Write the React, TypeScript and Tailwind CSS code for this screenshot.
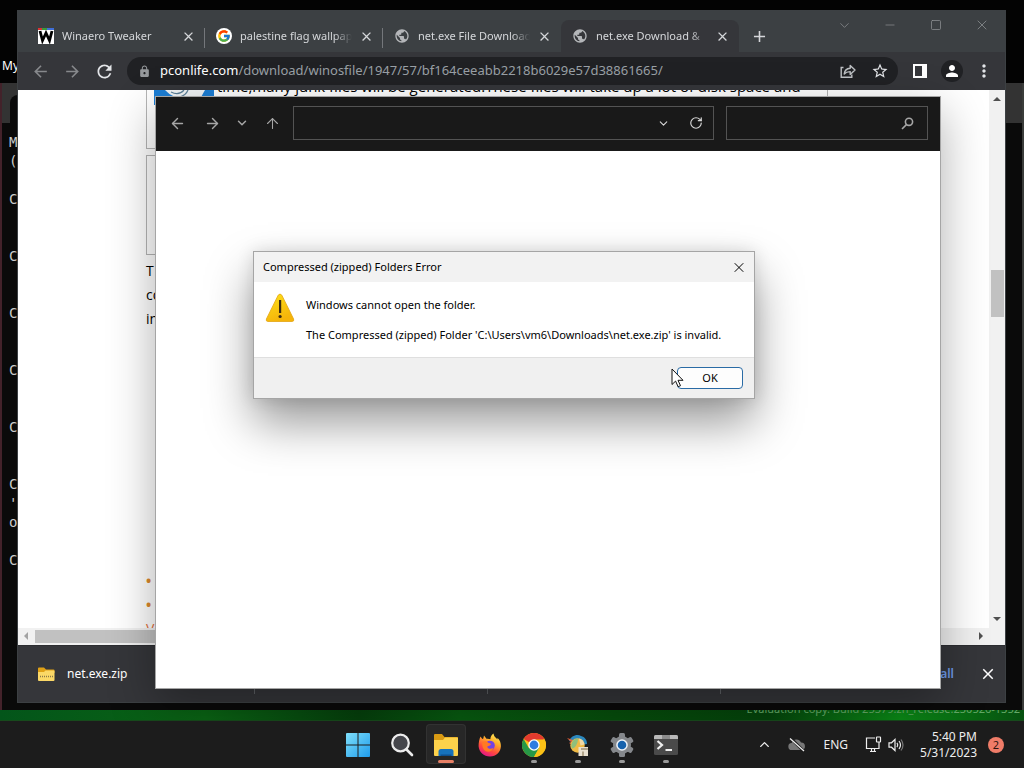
import React from 'react';
import { FcGoogle } from 'react-icons/fc';
import {
  MdAdd, MdArrowBack, MdArrowForward, MdClose, MdLock, MdMoreVert,
  MdPerson, MdPublic, MdRefresh, MdStarBorder,
} from 'react-icons/md';
import { ArrowLeft, ArrowRight, ArrowUp, ChevronDown, ChevronUp, Minus, RotateCw, Square, X } from 'lucide-react';

const CONSOLE_LINES = ['M', '(', '', 'C', '', '', 'C', '', '', 'C', '', '', 'C', '', '', 'C', '', '', 'C', "'", 'o', '', 'C'];

const WinaeroIcon = () => (
  <svg width="16" height="16" viewBox="0 0 16 16" className="shrink-0">
    <path d="M0 0h16v16H0z" fill="#fff" />
    <path d="M0 0h4v2H0z" fill="#d33" />
    <path d="M4 0h5v2H4z" fill="#3a9a3a" />
    <path d="M9 0h7v2H9z" fill="#3f6fd8" />
    <path d="M2 3l2.500 9.500L8 5l3.500 7.500L14 3" fill="none" stroke="#000" strokeWidth="2.800" />
  </svg>
);

const TABS = [
  { title: 'Winaero Tweaker', icon: <WinaeroIcon />, active: false, divider: true },
  {
    title: 'palestine flag wallpaper',
    icon: <span className="w-4 h-4 shrink-0 rounded-full bg-white flex items-center justify-center"><FcGoogle size={14} /></span>,
    active: false,
    divider: true,
  },
  { title: 'net.exe File Download', icon: <MdPublic size={16} className="shrink-0 text-[#b4b6b9]" />, active: false, divider: false },
  { title: 'net.exe Download &', icon: <MdPublic size={16} className="shrink-0 text-[#b4b6b9]" />, active: true, divider: false },
];

const ShareIcon = () => (
  <svg width="16" height="16" viewBox="0 0 16 16" fill="none" stroke="currentColor" strokeWidth="1.4">
    <path d="M3.5 4.5H1.2v9.8h10.6v-2.8" />
    <path d="M4.2 11c.4-3.6 2.500-5.600 6-5.800V2.500L15 7l-4.800 4.500V8.600C7.600 8.600 5.600 9.300 4.200 11z" strokeLinejoin="round" />
  </svg>
);

const FolderZipIcon = () => (
  <svg width="17" height="15" viewBox="0 0 17 15">
    <path d="M0 1.500Q0 .5 1 .5h5l2 2h7.500q1 0 1 1V6H0z" fill="#e0a116" />
    <path d="M0 5h6l1.500-1.500h8.500q.5 0 .5.500v9q0 1-1 1H1q-1 0-1-1z" fill="#fbd867" />
    <path d="M2 9.500h13" stroke="#8a7a4a" strokeWidth="1.500" strokeDasharray="1 1" />
  </svg>
);

const WarningIcon = () => (
  <svg width="30" height="30" viewBox="0 0 30 30" className="shrink-0">
    <defs>
      <linearGradient id="warn" x1="0" y1="0" x2="0.4" y2="1">
        <stop offset="0" stopColor="#fde21b" />
        <stop offset="1" stopColor="#f5b40a" />
      </linearGradient>
    </defs>
    <path d="M13.200 2.200q1.800-2.400 3.600 0L28.600 26q.8 2.500-1.600 2.500H3Q.6 28.500 1.400 26z" fill="url(#warn)" stroke="#e3a512" strokeWidth=".8" />
    <rect x="14" y="7" width="2.200" height="13" fill="#3a2a12" />
    <circle cx="15.100" cy="23.500" r="1.600" fill="#3a2a12" />
  </svg>
);

const StartIcon = () => (
  <svg width="24" height="24" viewBox="0 0 24 24">
    <defs>
      <linearGradient id="win" x1="0" y1="0" x2="1" y2="1">
        <stop offset="0" stopColor="#7fe0fb" />
        <stop offset="1" stopColor="#1f9bea" />
      </linearGradient>
    </defs>
    <path d="M1 0h10.500v11.500H0V1q0-1 1-1zM12.500 0H23q1 0 1 1v10.500H12.500zM0 12.500h11.500V24H1q-1 0-1-1zM12.500 12.500H24V23q0 1-1 1H12.500z" fill="url(#win)" />
  </svg>
);

const SearchTaskIcon = () => (
  <svg width="24" height="24" viewBox="0 0 24 24">
    <circle cx="10.500" cy="10" r="8.300" fill="#45464b" stroke="#ececec" strokeWidth="2.200" />
    <path d="M16.500 16.500l5.500 5.500" stroke="#ececec" strokeWidth="2.600" strokeLinecap="round" />
  </svg>
);

const ExplorerIcon = () => (
  <svg width="26" height="24" viewBox="0 0 26 24">
    <path d="M1 2q0-1 1-1h7l2.500 3H24q1 0 1 1v5H1z" fill="#d99a13" />
    <path d="M1 7h9l2-2.500h12.500q.5 0 .5.500v17q0 1-1 1H2q-1 0-1-1z" fill="#fdd24b" />
    <path d="M5.500 23v-4.500q0-2.500 2.500-2.500h10q2.500 0 2.500 2.500V23z" fill="#1672bd" />
    <path d="M7.500 23v-1.500h11V23z" fill="#0e4f8d" />
  </svg>
);

const FirefoxIcon = () => (
  <svg width="24" height="24" viewBox="0 0 24 24">
    <defs>
      <linearGradient id="ff" x1="0.800" y1="0" x2="0.300" y2="1">
        <stop offset="0" stopColor="#fff05a" />
        <stop offset="0.350" stopColor="#ffae2b" />
        <stop offset="0.700" stopColor="#ff4a3d" />
        <stop offset="1" stopColor="#e3148c" />
      </linearGradient>
    </defs>
    <path d="M2.500 3.500l1.800 2.600 1-.5.700-3 2.500 3.200c1.800-.3 3 .2 3.800.4.300-3 1.400-4.700 3.200-5.800.3 2.200 1.300 3.400 2.700 4.700l1 1.500.4-1.500c2.400 2.300 3.400 5 3.300 8.200C22.700 19 18.300 23.500 12 23.500S1 19 .6 13.200C.5 10 1.400 6 2.500 3.500z" fill="url(#ff)" />
    <circle cx="12" cy="12.500" r="4.800" fill="#7542e5" />
    <path d="M4.500 9c2.400-1.400 4.400-1 6 1 2 .3 2.500.8 2.300 1.700-1 1.300-3.300 1.100-3.500 2.300.5 2.200 4.200 2.300 6 .8-1 3.700-5 5-8 3.200C4.800 16.300 3.700 12.500 4.500 9z" fill="#ff7a24" />
  </svg>
);

const ChromeIcon = () => (
  <svg width="24" height="24" viewBox="0 0 24 24">
    <circle cx="12" cy="12" r="12" fill="#fbc116" />
    <path d="M12 12L1.600 6A12 12 0 0 1 22.400 6z" fill="#e33b2e" />
    <path d="M1.600 6A12 12 0 0 0 12 24l5.200-9L12 12l-5.200 3z" fill="#279847" />
    <path d="M12 6.500h10.700A12 12 0 0 1 12 24l5-9z" fill="#fbc116" />
    <circle cx="12" cy="12" r="5.700" fill="#fff" />
    <circle cx="12" cy="12" r="4.400" fill="#2f7de1" />
  </svg>
);

const TweakerIcon = () => (
  <svg width="24" height="24" viewBox="0 0 24 24">
    <path d="M3 8C5 3 11 .5 15 3c4 1 6 4 6 8l-6 1-8-3z" fill="#2c88bd" />
    <path d="M1 5l6 2-2 2zM3 10l4-2 1 5z" fill="#e1603b" />
    <circle cx="11.500" cy="12.500" r="7.200" fill="#efb944" />
    <path d="M12 5.500a7 7 0 0 0-6 10c3 0 6-5 6-10z" fill="#8fbf7c" />
    <path d="M13 5.500a7 7 0 0 1 5.500 6l-4 1z" fill="#f1d9a5" />
    <path d="M12.500 14h9.500v9h-9.500z" fill="#e8e0cf" />
    <path d="M15 16h7M17 18.500v4.500" stroke="#9d8e73" strokeWidth="1.500" />
  </svg>
);

const SettingsIcon = () => (
  <svg width="24" height="24" viewBox="0 0 24 24">
    <g fill="#85888c">
      <circle cx="12" cy="12" r="9" />
      <rect x="9" y="0" width="6" height="24" rx="1.500" />
      <rect x="9" y="0" width="6" height="24" rx="1.500" transform="rotate(60 12 12)" />
      <rect x="9" y="0" width="6" height="24" rx="1.500" transform="rotate(120 12 12)" />
    </g>
    <circle cx="12" cy="12" r="5.800" fill="#eef3f8" />
    <circle cx="12" cy="12" r="4.300" fill="#1662ad" />
  </svg>
);

const TerminalIcon = () => (
  <svg width="24" height="20" viewBox="0 0 24 20">
    <rect width="24" height="20" rx="1.500" fill="#4a4a4a" />
    <path d="M0 4V1.500Q0 0 1.500 0h21Q24 0 24 1.500V4z" fill="#b9b9b9" />
    <path d="M8 0h8v4H8z" fill="#8b8b8b" />
    <path d="M3.500 6l4.500 4-4.500 4" fill="none" stroke="#f0f0f0" strokeWidth="2.200" />
    <path d="M11.500 15h6.500" stroke="#f0f0f0" strokeWidth="2" />
  </svg>
);

const APPS = [
  { name: 'Start', icon: <StartIcon />, state: 'closed' },
  { name: 'Search', icon: <SearchTaskIcon />, state: 'closed' },
  { name: 'File Explorer', icon: <ExplorerIcon />, state: 'active' },
  { name: 'Firefox', icon: <FirefoxIcon />, state: 'closed' },
  { name: 'Chrome', icon: <ChromeIcon />, state: 'open' },
  { name: 'Winaero Tweaker', icon: <TweakerIcon />, state: 'open' },
  { name: 'Settings', icon: <SettingsIcon />, state: 'open' },
  { name: 'Terminal', icon: <TerminalIcon />, state: 'open' },
];

const ConsoleWindow = () => (
  <div className="absolute top-[83px] inset-x-0 bottom-[11px] bg-[#0a0a0a] border-l-2 border-l-[#43222a] border-r-2 border-r-[#3a3c3a]">
    <div className="h-10 bg-[#333333] flex items-end">
      <div className="ml-2 h-7 w-60 rounded-tl-lg bg-[#0a0a0a]" />
    </div>
    <pre className="pt-[10px] pl-[7px] text-[14px] leading-[19px] text-[#cccccc] font-['DejaVu_Sans_Mono',monospace]">
      {CONSOLE_LINES.join('\n')}
    </pre>
  </div>
);

const TabStrip = () => (
  <div className="h-[42px] flex items-end pl-[9px] bg-[#3c4043] text-[#d5d7da]">
    {TABS.map(tab => (
      <div
        key={tab.title}
        className={`relative h-8 w-[178px] min-w-0 flex items-center pl-[11px] pr-[9px] rounded-t-lg ${tab.active ? 'bg-[#35363a]' : ''}`}
      >
        {tab.icon}
        <span className="ml-2 w-[112px] shrink-0 overflow-hidden whitespace-nowrap text-[11px] [mask-image:linear-gradient(to_right,#000_84%,transparent)]">
          {tab.title}
        </span>
        <button aria-label={`Close ${tab.title}`} className="ml-auto w-4 h-4 flex items-center justify-center">
          <MdClose size={15} />
        </button>
        {tab.divider && <span className="absolute right-0 top-2 h-5 w-px bg-[#74777b]" />}
      </div>
    ))}
    <button aria-label="New tab" className="h-8 w-10 flex items-center justify-center"><MdAdd size={19} /></button>
    <div className="ml-auto h-full flex items-start text-[#8d9093]">
      <button aria-label="Search tabs" className="w-[46px] h-[30px] flex items-center justify-center"><ChevronDown size={15} strokeWidth={1.2} /></button>
      <button aria-label="Minimize" className="w-[46px] h-[30px] flex items-center justify-center"><Minus size={14} strokeWidth={1.2} /></button>
      <button aria-label="Maximize" className="w-[46px] h-[30px] flex items-center justify-center"><Square size={12} strokeWidth={1.5} /></button>
      <button aria-label="Close window" className="w-[46px] h-[30px] flex items-center justify-center"><X size={16} strokeWidth={1.2} /></button>
    </div>
  </div>
);

const BrowserToolbar = () => (
  <div className="h-[38px] flex items-center pl-[6px] pr-[5px] bg-[#35363a] text-[#e3e5e8]">
    <button aria-label="Back" className="w-8 h-7 flex items-center justify-center text-[#87898c]"><MdArrowBack size={19} /></button>
    <button aria-label="Forward" className="w-8 h-7 flex items-center justify-center text-[#87898c]"><MdArrowForward size={19} /></button>
    <button aria-label="Reload" className="w-8 h-7 flex items-center justify-center"><MdRefresh size={21} /></button>
    <div className="relative ml-[7px] h-7 flex-1 min-w-0 rounded-full bg-[#202124] flex items-center pl-[11px] pr-[2px]">
      <input aria-label="Address" className="absolute inset-0 rounded-full bg-transparent" />
      <MdLock size={13} className="shrink-0 text-[#96999c]" />
      <span className="ml-[9px] truncate text-[13px] text-[#9aa0a6]">
        <span className="text-white">pconlife.com</span>/download/winosfile/1947/57/bf164ceeabb2218b6029e57d38861665/
      </span>
      <div className="relative ml-auto flex">
        <button aria-label="Share" className="w-8 h-7 flex items-center justify-center text-[#bfc2c5]"><ShareIcon /></button>
        <button aria-label="Bookmark" className="w-8 h-7 flex items-center justify-center"><MdStarBorder size={18} /></button>
      </div>
    </div>
    <button aria-label="Side panel" className="ml-[6px] w-8 h-7 flex items-center justify-center">
      <span className="w-[14px] h-[14px] border-2 border-r-[5px] border-white" />
    </button>
    <button aria-label="Profile" className="w-8 h-7 flex items-center justify-center">
      <span className="w-[22px] h-[22px] rounded-full bg-[#202124] flex items-center justify-center text-white"><MdPerson size={18} /></span>
    </button>
    <button aria-label="Menu" className="w-8 h-7 flex items-center justify-center"><MdMoreVert size={20} /></button>
  </div>
);

const WebPage = () => (
  <div className="flex-1 min-w-0 overflow-hidden pl-32 font-['Open_Sans','Noto_Sans',sans-serif] text-black">
    <div className="h-[59px] w-[682px] border border-t-0 border-[#b5b5b5] pl-[7px] flex items-start">
      <svg width="60" height="15" viewBox="0 0 60 15" className="shrink-0">
        <path d="M0 0h60v15H0z" fill="#1d7fd6" />
        <path d="M11 0q10 12 35 9l5-9z" fill="#f2f5f7" />
        <path d="M17 2q8 4 13-2M26 7q6-2 8-7" fill="none" stroke="#5b7f98" strokeWidth="1.200" />
      </svg>
      <p className="-mt-4 ml-[3px] whitespace-nowrap text-[15px] leading-6">
        time,many junk files will be generated.These files will take up a lot of disk space and
      </p>
    </div>
    <div className="mt-[6px] h-[100px] w-[682px] border border-[#b5b5b5]" />
    <p className="mt-1 text-[14px] leading-6 whitespace-pre">{'T\nco\nin'}</p>
    <ul className="mt-[238px] text-[14px] leading-6 font-bold text-[#dd8a2c]">
      <li>•</li>
      <li>•</li>
    </ul>
    <a href="#" className="block text-[14px] leading-6 text-[#e2703a]">Va</a>
  </div>
);

const Triangle = ({ d, color }: { d: string; color: string }) => (
  <svg width="8" height="8" viewBox="0 0 8 8" className="shrink-0"><path d={d} fill={color} /></svg>
);

const BrowserWindow = () => (
  <section aria-label="Chrome" className="absolute left-[17px] right-[18px] top-[10px] bottom-[18px] flex flex-col border border-x-[#3c4043] border-b-[#3c4043] border-t-0 overflow-hidden bg-[#35363a]">
    <TabStrip />
    <BrowserToolbar />
    <div className="flex-1 min-h-0 flex bg-white">
      <div className="flex-1 min-w-0 flex flex-col">
        <div className="flex-1 min-h-0 overflow-hidden flex"><WebPage /></div>
        <div className="h-[17px] flex items-center justify-between bg-[#f1f1f1] px-1 pb-px">
          <Triangle d="M6 0v8L2 4z" color="#a3a3a3" />
          <div className="ml-[5px] mr-auto h-[13px] w-3/5 bg-[#c1c1c1]" />
          <Triangle d="M2 0v8l4-4z" color="#505050" />
        </div>
      </div>
      <div className="w-4 flex flex-col items-center bg-[#f1f1f1] pt-[5px] pb-[22px]">
        <Triangle d="M0 6h8L4 2z" color="#505050" />
        <div className="mt-[167px] w-[13px] h-[47px] bg-[#c1c1c1]" />
        <div className="mt-auto flex"><Triangle d="M0 2h8L4 6z" color="#505050" /></div>
      </div>
    </div>
    <div className="h-[57px] flex items-center bg-[#35363a] border-t border-[#2c2d31] text-white">
      <button className="h-10 w-[237px] flex items-center pl-5 border-r border-[#5f6266] text-[12px]">
        <FolderZipIcon />
        <span className="ml-3">net.exe.zip</span>
      </button>
      <span className="h-10 w-[233px] border-r border-[#5f6266]" />
      <span className="h-10 w-[233px] border-r border-[#5f6266]" />
      <a href="#" className="ml-auto text-[12px] text-[#6f9be8] font-semibold">Show all</a>
      <button aria-label="Close downloads" className="ml-[25px] mr-2"><MdClose size={18} /></button>
    </div>
  </section>
);

const ExplorerWindow = () => (
  <section aria-label="File Explorer" className="absolute left-[155px] right-[83px] top-[96px] bottom-8 flex flex-col border border-[#a5a5a5] bg-white shadow-[0_16px_44px_rgba(0,0,0,0.32)]">
    <div className="h-[54px] flex items-center bg-[#191919] pl-[6px] pr-3 pb-[2px] text-[#a6a6a6]">
      <button aria-label="Back" className="w-[30px] h-8 flex items-center justify-center"><ArrowLeft size={17} /></button>
      <button aria-label="Forward" className="ml-[5px] w-[30px] h-8 flex items-center justify-center"><ArrowRight size={17} /></button>
      <button aria-label="Recent" className="w-[30px] h-8 flex items-center justify-center"><ChevronDown size={14} strokeWidth={2.5} /></button>
      <button aria-label="Up" className="w-[30px] h-8 flex items-center justify-center"><ArrowUp size={17} strokeWidth={1.5} /></button>
      <div className="ml-[6px] flex-1 min-w-0 h-[34px] flex items-center border border-[#535353] pr-2">
        <input aria-label="Path" className="flex-1 min-w-0 bg-transparent" />
        <button aria-label="History" className="w-8 flex justify-center text-[#d8d8d8]"><ChevronDown size={13} /></button>
        <button aria-label="Refresh" className="w-[18px] ml-2 flex justify-center text-[#d8d8d8]"><RotateCw size={14} /></button>
      </div>
      <div className="ml-3 w-[202px] h-[34px] flex items-center border border-[#535353] pr-[13px]">
        <input aria-label="Search" className="flex-1 min-w-0 bg-transparent" />
        <svg width="13" height="13" viewBox="0 0 13 13" fill="none" stroke="currentColor" strokeWidth="1.600">
          <circle cx="8" cy="4.800" r="3.600" />
          <path d="M5.400 7.600L1 12" />
        </svg>
      </div>
    </div>
  </section>
);

const ErrorDialog = () => (
  <section role="alertdialog" aria-label="Error" className="absolute left-[253px] top-[251px] w-[502px] flex flex-col border border-[#a5a5a5] bg-white text-[11px] leading-5 text-black shadow-[0_24px_44px_rgba(0,0,0,0.4),0_0_16px_rgba(0,0,0,0.12)]">
    <div className="h-[30px] flex items-center justify-between bg-[#f2f2f2] pl-[9px] pr-[7px]">
      <h1>Compressed (zipped) Folders Error</h1>
      <button aria-label="Close" className="w-4 h-4 flex items-center justify-center"><X size={17} strokeWidth={1.5} /></button>
    </div>
    <div className="flex items-start pl-[11px] pt-[11px] pb-3">
      <WarningIcon />
      <div className="mt-[2px] ml-[11px] flex flex-col gap-[10px]">
        <p>Windows cannot open the folder.</p>
        <p className="whitespace-nowrap">The Compressed (zipped) Folder 'C:\Users\vm6\Downloads\net.exe.zip' is invalid.</p>
      </div>
    </div>
    <div className="h-[41px] flex items-center justify-end bg-[#f0f0f0] border-t border-[#dfdfdf] pr-[11px]">
      <button className="w-[66px] h-[22px] leading-5 rounded border border-[#2a6ba5] bg-[#fdfdfd]">OK</button>
    </div>
    <svg width="13" height="20" viewBox="0 0 13 20" className="absolute left-[417px] top-[116px]">
      <path d="M1 1v15.500l3.600-3.400 2.500 5.600 2.400-1-2.500-5.400H12z" fill="#fff" stroke="#111" strokeWidth="1" />
    </svg>
  </section>
);

const Taskbar = () => (
  <footer className="relative h-[47px] grid grid-cols-[1fr_auto_1fr] items-stretch bg-[#1c1c1c] text-[#eeeeee]">
    <div />
    <nav className="flex">
      {APPS.map(app => (
        <button key={app.name} aria-label={app.name} className="relative w-11 flex items-center justify-center">
          {app.state === 'active' && <span className="absolute inset-x-[2px] top-[3px] bottom-1 rounded bg-white/5 border border-white/5" />}
          <span className="relative">{app.icon}</span>
          {app.state === 'active' && <span className="absolute bottom-[5px] w-4 h-[3px] rounded-full bg-[#e88066]" />}
          {app.state === 'open' && <span className="absolute bottom-[5px] w-[6px] h-[3px] rounded-full bg-[#9a9a9a]" />}
        </button>
      ))}
    </nav>
    <div className="flex items-center justify-end pr-5 text-[12px] whitespace-nowrap">
      <button aria-label="Hidden icons"><ChevronUp size={15} strokeWidth={2.200} /></button>
      <svg width="18" height="16" viewBox="0 0 18 16" className="ml-4">
        <path d="M4 13a3.500 3.500 0 0 1-.3-7A5 5 0 0 1 13 5.500 3.800 3.800 0 0 1 14 13z" fill="#777" />
        <path d="M3 1.500l13 13" stroke="#1c1c1c" strokeWidth="3" />
        <path d="M2 1.500l14 12.500" stroke="#eee" strokeWidth="1.300" />
      </svg>
      <span className="ml-[17px]">ENG</span>
      <svg width="17" height="17" viewBox="0 0 17 17" className="ml-[17px]" fill="none" stroke="#eee" strokeWidth="1.200">
        <path d="M10 2H1.500v10.500H14V9M5 15.500h6M6.500 12.500v3M9.500 12.500v3M14 6v4" />
        <rect x="11.500" y="1" width="4" height="5" rx=".5" />
      </svg>
      <svg width="16" height="14" viewBox="0 0 16 14" className="ml-[6px]" fill="none" stroke="#eee" strokeWidth="1.200">
        <path d="M1 4.800h2.500L7 1.500v11L3.500 9.200H1zM9 4.800q1.500 2.200 0 4.400M11 3q3 4 0 8" />
        <path d="M13 1.500q4 5.500 0 11" stroke="#777" />
      </svg>
      <div className="ml-4 text-right leading-4">
        <p>5:40 PM</p>
        <p>5/31/2023</p>
      </div>
      <span className="ml-[11px] w-4 h-4 rounded-full bg-[#ef7c68] text-[#2b1410] text-[11px] leading-4 text-center">2</span>
    </div>
  </footer>
);

export default function App() {
  return (
    <div className="h-screen flex flex-col overflow-hidden bg-black font-['Noto_Sans','Open_Sans',sans-serif]">
      <main className="relative flex-1 min-h-0 overflow-hidden bg-[#030303]">
        <div className="absolute inset-x-0 bottom-0 h-[11px] bg-[linear-gradient(to_right,#03551a,#0a6414_20%,#053f0c_35%,#075a10_45%,#064d0c_60%,#04430b_75%,#0b8a17_88%,#06500f)] border-b border-[#174a1c]" />
        <span className="absolute left-[2px] top-[57px] text-[12px] leading-[18px] text-white">My</span>
        <p className="absolute right-1 bottom-1 text-[11px] leading-4 text-[#63a866]">Evaluation copy. Build 25379.zn_release.230526-1352</p>
        <ConsoleWindow />
        <BrowserWindow />
        <ExplorerWindow />
        <ErrorDialog />
      </main>
      <Taskbar />
    </div>
  );
}
